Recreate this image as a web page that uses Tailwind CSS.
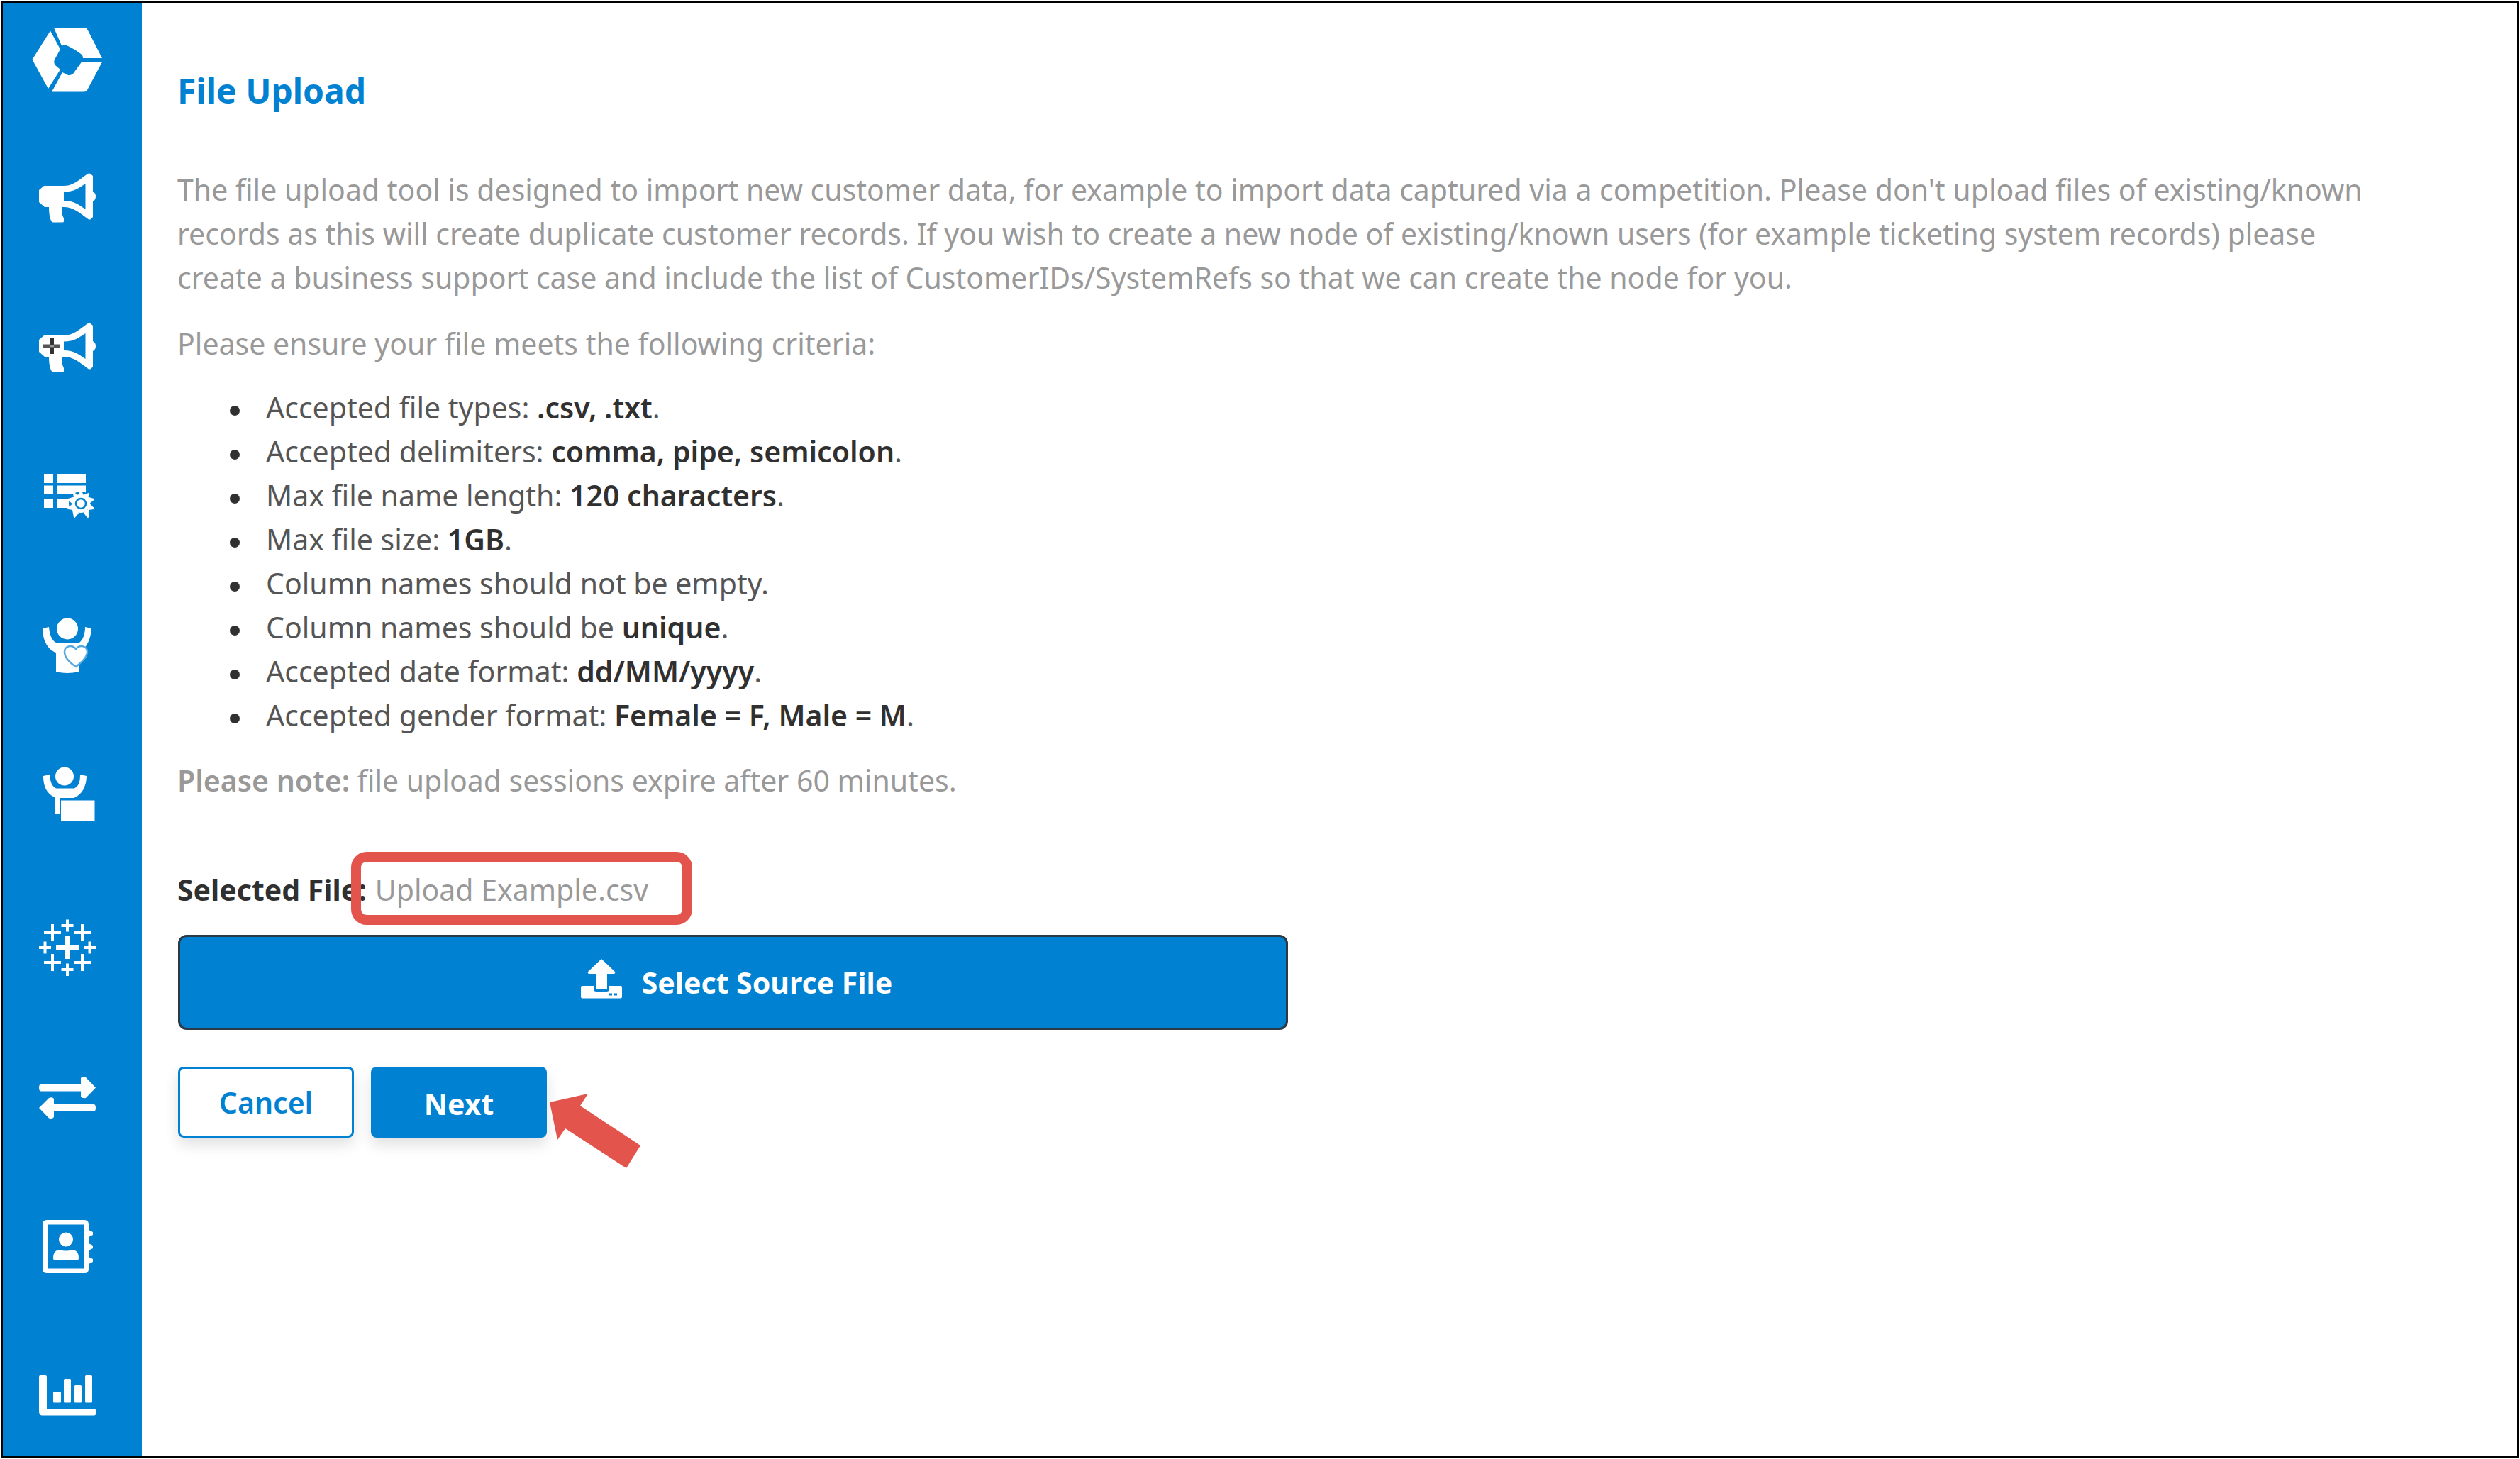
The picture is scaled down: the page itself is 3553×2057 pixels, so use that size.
<!DOCTYPE html>
<html lang="en">
<head>
    <meta charset="UTF-8">
    <meta name="viewport" content="width=device-width, initial-scale=1.0">
    <title>File Upload</title>
    <script src="https://cdn.jsdelivr.net/npm/@tailwindcss/browser@4"></script>
</head>
<body class="bg-white p-px font-['Noto_Sans',sans-serif] text-[41px] leading-[62px] text-[#999999]">

    <div class="flex min-h-[calc(100vh-2px)] border-3 border-black">

        <!-- Sidebar -->
        <nav class="flex w-[196px] shrink-0 flex-col items-center bg-[#0081d1] pt-[30px] pr-[14px] text-white" aria-label="Main">
            <a href="#" class="mb-[95px]" aria-label="Home">
                <svg class="size-[100px]" viewBox="0 0 100 100" fill="currentColor">
                    <path d="M31 5.3H74Q77 5.3 78.5 8L99 48H72Q72 44 69 42Q60 35 50 30.500Q46 29 42 30.500Z"/>
                    <path d="M26 9.500L40 35.500L32 50Q30 54 33 58L40 64L23 91L0.500 50Z"/>
                    <path d="M70 53.500H99L78 93Q76.500 95.500 73 95.500H28L43 68L50 71.500Q54 73 58 70Z"/>
                </svg>
            </a>
            <ul class="flex flex-col gap-[111px]">
                <li>
                    <a href="#" aria-label="Campaigns">
                        <svg class="size-[100px]" viewBox="0 0 100 100" fill="currentColor">
                            <path fill-rule="evenodd" d="M17 33H45C58 33 66 25 78 16.500Q81 14.500 83 16.500L86 19V41Q90 43 90 48Q90 53 86 55V77L83 80Q81 81.500 78 79C66 70 58 63 45 63H42V70Q43 75 45 79V83Q45 84.500 43 84.500H30Q28 84.500 27 82Q24 76 24 63H18L10 56V39ZM45 41.500V54C60 54 66 60 75.500 66V30C66 36 60 41.500 45 41.500Z"/>
                        </svg>
                    </a>
                </li>
                <li>
                    <a href="#" aria-label="New campaign">
                        <svg class="size-[100px]" viewBox="0 0 100 100" fill="currentColor">
                            <path fill-rule="evenodd" d="M17 33H45C58 33 66 25 78 16.500Q81 14.500 83 16.500L86 19V41Q90 43 90 48Q90 53 86 55V77L83 80Q81 81.500 78 79C66 70 58 63 45 63H42V70Q43 75 45 79V83Q45 84.500 43 84.500H30Q28 84.500 27 82Q24 76 24 63H18L10 56V39ZM45 41.500V54C60 54 66 60 75.500 66V30C66 36 60 41.500 45 41.500Z"/>
                            <path d="M15 48H39" stroke="#555555" stroke-width="5"/>
                            <path d="M28 36V59" stroke="#333333" stroke-width="6"/>
                            <path d="M25 48H31" stroke="#999999" stroke-width="3"/>
                        </svg>
                    </a>
                </li>
                <li>
                    <a href="#" aria-label="List settings">
                        <svg class="size-[100px]" viewBox="0 0 100 100" fill="currentColor">
                            <path d="M17 17H30V30H17ZM17 33.500H30V46H17ZM17 52H30V65H17ZM36 17H76V30H36ZM36 33.500H76V46H36ZM36 52H53V65H36Z"/>
                            <circle cx="69" cy="59" r="17" fill="#0081d1"/>
                            <circle cx="69" cy="59" r="13"/>
                            <path d="M69 41L72 48H66ZM80 45L78 52L73 48ZM87 53L81 58L80 51ZM87 66L80 67L81 60ZM79 78L74 72L80 68ZM60 78L58 68L65 72ZM51 66L58 60V67ZM51 53L58 51L57 58ZM59 44L65 48L60 52Z" stroke="currentColor" stroke-width="2" stroke-linejoin="round"/>
                            <circle cx="69" cy="59" r="7" fill="none" stroke="#0081d1" stroke-width="2.500"/>
                        </svg>
                    </a>
                </li>
                <li>
                    <a href="#" aria-label="Loyalty">
                        <svg class="size-[100px]" viewBox="0 0 100 100" fill="currentColor">
                            <circle cx="50" cy="24.500" r="15"/>
                            <path d="M15 24L24 22C25 33 28 41 34 44H67C72 40 75 32 75 22L84 24C83 38 78 52 66 58V85Q50 89 34 85V58C22 54 15 40 15 24Z"/>
                            <path d="M62 78C53 72 46 65 46 57C46 49 56 46 62 53C68 46 78 49 78 57C78 65 70 72 62 78Z" stroke="#55a9e0" stroke-width="2.500"/>
                        </svg>
                    </a>
                </li>
                <li>
                    <a href="#" aria-label="Customer">
                        <svg class="size-[100px]" viewBox="0 0 100 100" fill="currentColor">
                            <circle cx="46" cy="21.500" r="13"/>
                            <path d="M16 21L25 19C26 30 28 35 34 38.500H60C66 35 68 30 68 19L77 21C77 36 70 48 59 52H39V74H32V51C21 46 16 36 16 21Z"/>
                            <path d="M41 55.500H88.500V84H41Z"/>
                        </svg>
                    </a>
                </li>
                <li>
                    <a href="#" aria-label="Analytics">
                        <svg class="size-[100px]" viewBox="0 0 100 100" fill="none" stroke="currentColor">
                            <path stroke-width="8" d="M34 52H66M50 36V68"/>
                            <path stroke-width="4" d="M17 31H41M29 19V43M59 31H83M71 19V43M17 73H41M29 61V85M59 73H83M71 61V85"/>
                            <path stroke-width="4" d="M41.500 21H58.500M50 12.500V29.500M41.500 83H58.500M50 74.500V92M10 52H27M18.500 43.500V60.500M73 52H90M81.500 43.500V60.500"/>
                        </svg>
                    </a>
                </li>
                <li>
                    <a href="#" aria-label="Transfers">
                        <svg class="size-[100px]" viewBox="0 0 100 100" fill="currentColor">
                            <path d="M13 33.500H69V25Q71 22 76 24L90 38.500L76 53Q71 54 69 51V43.500H13Q10 43.500 10 38.500Q10 33.500 13 33.500Z"/>
                            <path d="M87 62H31V54Q29 51 24 53L10 67L24 81.500Q29 83 31 80V72H87Q90 72 90 67Q90 62 87 62Z"/>
                        </svg>
                    </a>
                </li>
                <li>
                    <a href="#" aria-label="Contacts">
                        <svg class="size-[100px]" viewBox="0 0 100 100" fill="currentColor">
                            <path fill-rule="evenodd" d="M21 14H74Q80 14 80 20V28L86 31V35L80 38V47L86 50V54L80 57V66L86 69V73L80 76V83Q80 89 74 89H21Q15 89 15 83V20Q15 14 21 14ZM23 20.500V82.500H73V20.500Z"/>
                            <circle cx="48" cy="41.500" r="10"/>
                            <path d="M30 68Q30 56 40 56Q48 59 56 56Q66 56 66 68Q66 70.500 63 70.500H33Q30 70.500 30 68Z"/>
                        </svg>
                    </a>
                </li>
                <li>
                    <a href="#" aria-label="Reports">
                        <svg class="size-[100px]" viewBox="0 0 100 100" fill="currentColor">
                            <path d="M12 22H19Q21 22 21 24V69H88Q90 69 90 71V76.500Q90 78.500 88 78.500H15Q10 78.500 10 73V24Q10 22 12 22Z"/>
                            <rect x="30" y="45" width="11" height="15.500" rx="1.500"/>
                            <rect x="45" y="27" width="10" height="33.500" rx="1.500"/>
                            <rect x="60" y="36" width="10" height="24.500" rx="1.500"/>
                            <rect x="75" y="22" width="10" height="38.500" rx="1.500"/>
                        </svg>
                    </a>
                </li>
            </ul>
        </nav>

        <!-- Content -->
        <main class="min-w-0 flex-1 pt-[88px] pr-[180px] pb-10 pl-[50px]">
            <h1 class="mb-[72px] text-[48px] leading-[72px] font-bold text-[#0081d1]">File Upload</h1>

            <p class="mb-[31px]">The file upload tool is designed to import new customer data, for example to import data captured via a competition. Please don't upload files of existing/known records as this will create duplicate customer records. If you wish to create a new node of existing/known users (for example ticketing system records) please create a business support case and include the list of CustomerIDs/SystemRefs so that we can create the node for you.</p>
            <p class="mb-[28px]">Please ensure your file meets the following criteria:</p>

            <ul class="mb-[30px] pl-[74px] text-[#555555] *:before:mr-[37px] *:before:inline-block *:before:size-[14px] *:before:rounded-full *:before:bg-[#303030] *:before:align-middle *:before:content-['']">
                <li>Accepted file types: <b class="font-semibold text-[#303030]">.csv, .txt</b>.</li>
                <li>Accepted delimiters: <b class="font-semibold text-[#303030]">comma, pipe, semicolon</b>.</li>
                <li>Max file name length: <b class="font-semibold text-[#303030]">120 characters</b>.</li>
                <li>Max file size: <b class="font-semibold text-[#303030]">1GB</b>.</li>
                <li>Column names should not be empty.</li>
                <li>Column names should be <b class="font-semibold text-[#303030]">unique</b>.</li>
                <li>Accepted date format: <b class="font-semibold text-[#303030]">dd/MM/yyyy</b>.</li>
                <li>Accepted gender format: <b class="font-semibold text-[#303030]">Female = F, Male = M</b>.</li>
            </ul>

            <p class="mb-[92px]"><b class="font-semibold">Please note:</b> file upload sessions expire after 60 minutes.</p>

            <div class="relative mb-[33px] flex gap-[12px]">
                <b class="font-bold text-[#303030]">Selected File:</b>
                <span>Upload Example.csv</span>
                <!-- Highlight around the file name -->
                <div class="absolute -top-[22px] left-[245px] h-[103px] w-[481px] rounded-[22px] border-14 border-[#e3544d]"></div>
            </div>

            <button type="button" class="mb-[52px] ml-px flex h-[134px] w-full max-w-[1565px] items-center justify-center gap-[28px] rounded-[12px] border-3 border-[#2b3a45] bg-[#0081d1] pl-[10px] font-bold text-white">
                <svg class="mb-[10px] h-[56px] w-[58px]" viewBox="0 0 58 56" fill="currentColor">
                    <path d="M2 38H18V43Q18 46 22 46H36Q40 46 40 43V38H56Q58 38 58 40V53Q58 55.500 56 55.500H2Q0 55.500 0 53V40Q0 38 2 38Z"/>
                    <path d="M29 0L48 18Q49 21 46 21H37V42H21V21H12Q9 21 10 18Z"/>
                    <path d="M40 48.500H44V51.500H40ZM47 48.500H51V51.500H47Z" fill="#0081d1"/>
                </svg>
                Select Source File
            </button>

            <div class="ml-px flex gap-[24px]">
                <button type="button" class="h-[100px] w-[248px] rounded-[8px] border-3 border-[#0081d1] bg-white font-semibold text-[#0081d1] shadow-[0_10px_20px_rgba(0,0,0,0.12)]">Cancel</button>
                <div class="relative">
                    <button type="button" class="h-[100px] w-[248px] rounded-[8px] bg-[#0081d1] pt-1 font-bold text-white shadow-[0_10px_20px_rgba(0,0,0,0.12)]">Next</button>
                    <!-- Pointer arrow -->
                    <svg class="absolute top-[38px] left-[252px] h-[105px] w-[128px]" viewBox="0 0 128 105" fill="#e3544d">
                        <path d="M0 12L54 0L43 17L128 73L108 105L22 49L11 65Z"/>
                    </svg>
                </div>
            </div>
        </main>
    </div>

</body>
</html>
